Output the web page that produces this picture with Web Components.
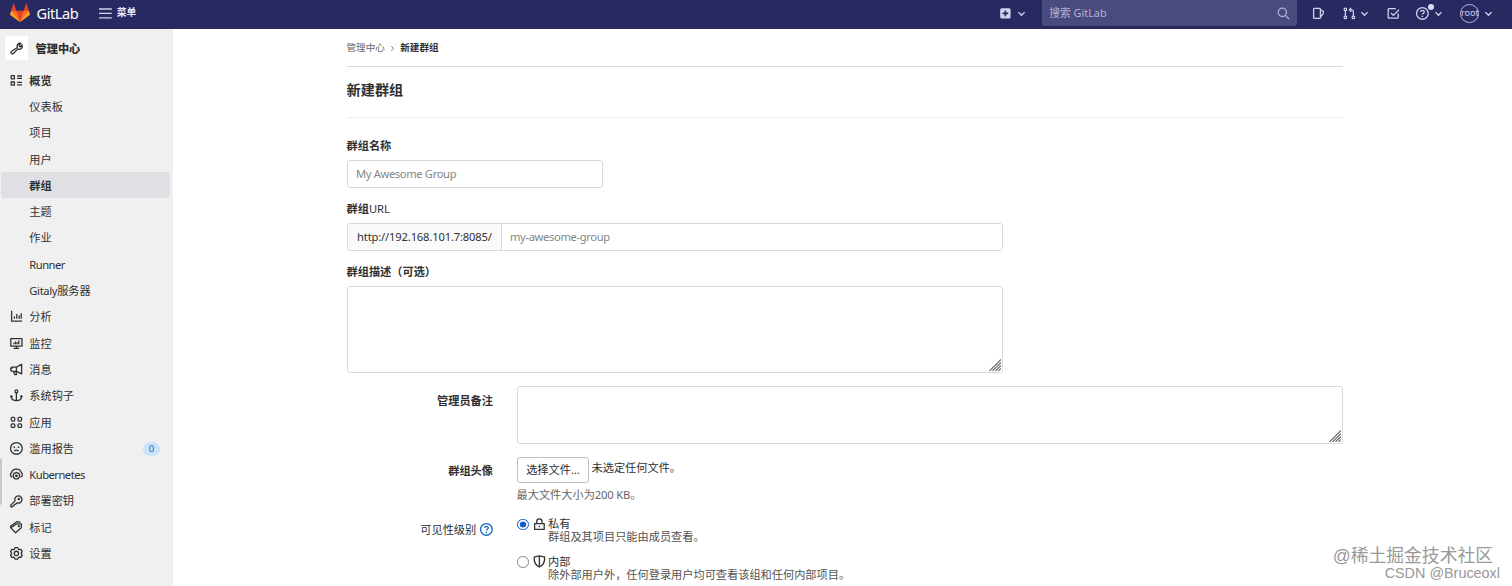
<!DOCTYPE html>
<html lang="zh-CN">
<head>
<meta charset="utf-8">
<title>新建群组 · GitLab</title>
<style>
    body {
        margin: 0;
        height: 586px;
        overflow: hidden;
        background: #fff;
        color: #303030;
        font-family: "Noto Sans", "Noto Sans CJK SC", sans-serif;
        font-size: 11.2px;
        line-height: 16px;
    }
</style>
</head>
<body>
<admin-page></admin-page>

<script>
const icons = {
    admin: '<path d="M9.2 6.8a3.6 3.6 0 0 1 4.400-5L11.200 4.200l.5 1.200 1.400.6 2-2.200a3.700 3.700 0 0 1-5.200 4.800L4.200 14.300a1.700 1.700 0 0 1-2.500-2.500z"/>',
    overview: '<path d="M1.500 2h4v4h-4zM1.500 10h4v4h-4zM9 2.500h6M9 5.500h6M9 10.500h6M9 13.500h6"/>',
    chart: '<path d="M2 1v13h13M5.500 8v3M8.500 5v6M11.500 7v4M14 4v7"/>',
    monitor: '<path d="M1 2h14v9.500H1zM8 11.500V14M4.500 14.300h7M5 7v2M7 5.500V9M9 6.500V9M11 4.500V9"/>',
    messages: '<path d="M14.500 1.500v12L8 10.500H3.500a2.700 2.700 0 0 1 0-5.400H8zM8 5v5.500M4.500 10.500l1.300 4h2.400l-1-4M1 5l2 2"/>',
    hook: '<circle cx="8" cy="3" r="1.800"/><path d="M8 5v9.500M1.500 8.500v1.700C2 13 5 14.500 8 14.500s6-1.500 6.500-4.300V8.500M.5 10l1-1.600L3.200 10M12.800 10l1.700-1.600 1 1.600"/>',
    apps: '<rect x="1.500" y="1.800" width="4.500" height="4.500" rx="1.500"/><rect x="10" y="1.800" width="4.500" height="4.500" rx="1.500"/><rect x="1.500" y="9.800" width="4.500" height="4.500" rx="1.500"/><rect x="10" y="9.800" width="4.500" height="4.500" rx="1.500"/>',
    abuse: '<circle cx="8" cy="8" r="7.300"/><path d="M5.500 11.500c.8-1.700 4.200-1.700 5 0"/><path d="M4.300 6l2 1M11.700 6l-2 1" stroke-width="1.600"/>',
    cloud: '<path d="M2.800 11.500A3.200 3.200 0 0 1 2 5.800C3.200-.2 12.800-.2 14 5.800a3.200 3.200 0 0 1-.8 5.700"/><path d="M8 5.500l3.300 1.600.8 3.400-2.200 3.200H6.100l-2.200-3.200.8-3.400z"/><circle cx="8" cy="9.800" r="1"/>',
    key: '<path d="M6.300 7.300a4.500 4.500 0 1 1 2.500 2.500L7 11.500l-1.500.2-.3 1.500-1.400.3-.6 1.300H1v-2.200z"/><circle cx="11" cy="5" r=".7"/>',
    labels: '<path d="M1 8.500L8.500 3.500l5.800.2-.2 4.800L7 14.800zM1 8.500l-.3-1.800L8.500.9l4.500.6"/><circle cx="11" cy="6.500" r=".6"/>',
    settings: '<path d="M6.300.9h3.400l.7 1.700 1.300.7 2-.3 1.600 2.800-1.100 1.500v1.400l1.100 1.500-1.600 2.800-2-.3-1.300.7-.7 1.700H6.300l-.7-1.700-1.300-.7-2 .3L.7 10.200l1.100-1.500V7.300L.7 5.800 2.300 3l2 .3 1.300-.7z"/><circle cx="8" cy="8" r="2.700"/>',
    menu: '<path d="M0 2.500h16M0 8h16M0 13.500h16"/>',
    plus: '<path d="M3.500 1.500h9a2 2 0 0 1 2 2v9a2 2 0 0 1-2 2h-9a2 2 0 0 1-2-2v-9a2 2 0 0 1 2-2z" fill="currentColor" stroke="none"/><path d="M8 4.500v7M4.500 8h7" stroke="#292961" stroke-width="2"/>',
    chevron: '<path d="M3.500 6L8 10.500 12.500 6" stroke-width="2"/>',
    right: '<path d="M6 4l4 4-4 4"/>',
    search: '<circle cx="6.700" cy="6.700" r="5.200"/><path d="M10.500 10.500L15 15"/>',
    issues: '<path d="M3 1.700h6.500a1 1 0 0 1 1 1v10.600a1 1 0 0 1-1 1H3a1 1 0 0 1-1-1V2.700a1 1 0 0 1 1-1zM10.500 3.500l3.900 2-.6 3-3.300 4"/>',
    merge: '<circle cx="3" cy="3" r="1.600"/><circle cx="3" cy="13" r="1.600"/><circle cx="13" cy="13" r="1.600"/><path d="M3 4.600v6.800M13 11.400V6a2.500 2.500 0 0 0-2.500-2.500H8.300M10.200 1L8 3.500 10.200 6"/>',
    todo: '<path d="M14 8v5a1 1 0 0 1-1 1H2.500a1 1 0 0 1-1-1V3a1 1 0 0 1 1-1H11M5 7.500l3 3L15 3.500"/>',
    help: '<circle cx="8" cy="8" r="7.300"/><path d="M5.800 6.300c.1-3 4.600-2.800 4.500-.1 0 1.500-2.300 1.600-2.300 3.300"/><path d="M8 10.900v1.600" stroke-width="1.800"/>',
    lock: '<path d="M2 7h12v7.300H2zM4.700 7V4.500a3.300 3.300 0 0 1 6.600 0V7M8 9.700v2"/>',
    shield: '<path d="M1.500 2.500C4 2.500 6 1 8 1s4 1.500 6.500 1.500c.5 6-1 10-6.500 12.500C2.500 12.500 1 8.500 1.500 2.500zM8 1v14"/>'
};

class GlIcon extends HTMLElement {
    connectedCallback() {
        this.attachShadow({ mode: 'open' });
        this.shadowRoot.innerHTML = `
            <style>
                :host { display: inline-block; flex: none; width: 12.8px; height: 12.8px; }
                svg { display: block; width: 100%; height: 100%; overflow: visible; }
            </style>
            <svg viewBox="0 0 16 16" fill="none" stroke="currentColor" stroke-width="1.6" stroke-linejoin="round">${icons[this.getAttribute('name')]}</svg>
        `;
    }
}
customElements.define('gl-icon', GlIcon);

class NavBar extends HTMLElement {
    connectedCallback() {
        this.attachShadow({ mode: 'open' });
        this.shadowRoot.innerHTML = `
            <style>
                :host {
                    display: flex;
                    align-items: center;
                    flex: none;
                    box-sizing: border-box;
                    height: 28.5px;
                    padding: 0 17.6px 2.5px 10px;
                    background: #292961;
                    color: #d1d1f0;
                }
                .logo { width: 20px; height: 20px; }
                .brand { margin-left: 6.5px; font-size: 14.6px; letter-spacing: -.45px; color: #fff; width: 62px; }
                .menu { margin-left: 5.5px; font-size: 9.8px; font-weight: 700; color: #e8e8fa; }
                .search {
                    display: flex;
                    align-items: center;
                    justify-content: space-between;
                    box-sizing: border-box;
                    width: 255px;
                    height: 26px;
                    padding: 1px 7px;
                    margin-left: 15px;
                    border-radius: 0 0 3px 3px;
                    background: #4b4a7e;
                    color: #b3b2d6;
                    font-size: 10.8px;
                }
                .chev { width: 11px; height: 11px; }
                .help { position: relative; display: flex; margin-left: 16px; }
                .help i {
                    position: absolute;
                    left: 11.5px;
                    top: -3px;
                    width: 6px;
                    height: 6px;
                    border-radius: 50%;
                    background: #dcdcf7;
                }
                .avatar {
                    display: flex;
                    align-items: center;
                    justify-content: center;
                    box-sizing: border-box;
                    width: 19px;
                    height: 19px;
                    margin-left: 16.5px;
                    border: 1px solid #b5b4dc;
                    border-radius: 50%;
                    font-size: 9px;
                }
            </style>
            <svg class="logo" viewBox="0 0 36 36">
                <path fill="#e24329" d="M2 14l9.380 9v-9l-4-12.280c-.205-.632-1.176-.632-1.380 0zM34 14l-9.380 9v-9l4-12.280c.205-.632 1.176-.632 1.380 0zM18 34.380L3 14h30z"/>
                <path fill="#fc6d26" d="M18 34.380L11.380 14H2l4 11zM18 34.380L24.620 14H34l-4 11z"/>
                <path fill="#fca326" d="M2 14L.1 20.160c-.18.565 0 1.200.5 1.560L18 34.380zM34 14l1.900 6.160c.18.565 0 1.200-.5 1.560L18 34.380z"/>
            </svg>
            <span class="brand">GitLab</span>
            <gl-icon name="menu"></gl-icon>
            <span class="menu">菜单</span>
            <gl-icon name="plus" style="margin-left:auto"></gl-icon>
            <gl-icon class="chev" name="chevron" style="margin-left:4px"></gl-icon>
            <div class="search"><span>搜索 GitLab</span><gl-icon name="search"></gl-icon></div>
            <gl-icon name="issues" style="margin-left:15px"></gl-icon>
            <gl-icon name="merge" style="margin-left:18px"></gl-icon>
            <gl-icon class="chev" name="chevron" style="margin-left:3.5px"></gl-icon>
            <gl-icon name="todo" style="margin-left:17px"></gl-icon>
            <span class="help"><gl-icon name="help"></gl-icon><i></i></span>
            <gl-icon class="chev" name="chevron" style="margin-left:4px"></gl-icon>
            <span class="avatar">root</span>
            <gl-icon class="chev" name="chevron" style="margin-left:4px"></gl-icon>
        `;
    }
}
customElements.define('nav-bar', NavBar);

class SideItem extends HTMLElement {
    connectedCallback() {
        const icon = this.getAttribute('icon');
        const badge = this.getAttribute('badge');
        this.attachShadow({ mode: 'open' });
        this.shadowRoot.innerHTML = `
            <style>
                :host {
                    display: flex;
                    align-items: center;
                    box-sizing: border-box;
                    width: 169.5px;
                    height: 26.3px;
                    padding: 1px 10px 0 9.5px;
                    border-radius: 3px;
                }
                :host([bold]) { font-weight: 700; }
                :host([active]) { background: #dfdfe4; }
                :host([latin]) { letter-spacing: -.5px; }
                .icon { display: flex; width: 19.3px; flex: none; margin-top: -1px; }
                .badge {
                    width: 17px;
                    height: 14px;
                    margin-left: auto;
                    border-radius: 7px;
                    background: #cbe2f9;
                    color: #1068bf;
                    font-size: 9.5px;
                    line-height: 14px;
                    text-align: center;
                }
            </style>
            <span class="icon">${icon ? `<gl-icon name="${icon}"></gl-icon>` : ''}</span>
            <slot></slot>
            ${badge ? `<span class="badge">${badge}</span>` : ''}
        `;
    }
}
customElements.define('side-item', SideItem);

const menuItems = [
    { text: '概览', icon: 'overview', bold: true },
    { text: '仪表板' },
    { text: '项目' },
    { text: '用户' },
    { text: '群组', bold: true, active: true },
    { text: '主题' },
    { text: '作业' },
    { text: 'Runner', latin: true },
    { text: '<span style="letter-spacing:-.35px">Gitaly</span>服务器' },
    { text: '分析', icon: 'chart' },
    { text: '监控', icon: 'monitor' },
    { text: '消息', icon: 'messages' },
    { text: '系统钩子', icon: 'hook' },
    { text: '应用', icon: 'apps' },
    { text: '滥用报告', icon: 'abuse', badge: '0' },
    { text: 'Kubernetes', icon: 'cloud', latin: true },
    { text: '部署密钥', icon: 'key' },
    { text: '标记', icon: 'labels' },
    { text: '设置', icon: 'settings' }
];

class SideBar extends HTMLElement {
    connectedCallback() {
        this.attachShadow({ mode: 'open' });
        this.shadowRoot.innerHTML = `
            <style>
                :host {
                    position: relative;
                    display: block;
                    flex: none;
                    box-sizing: border-box;
                    width: 173px;
                    padding: 7.5px 0 0 .5px;
                    background: #f0f0f0;
                }
                .context { display: flex; align-items: center; padding-left: 4.5px; margin-bottom: 7px; font-weight: 700; }
                .context span {
                    display: flex;
                    align-items: center;
                    justify-content: center;
                    width: 23px;
                    height: 24px;
                    margin-right: 7.5px;
                    background: #fff;
                }
                .context b { padding-top: 1px; }
                /* edge handle next to the window border */
                .handle {
                    position: absolute;
                    left: 0;
                    top: 429px;
                    width: 2px;
                    height: 47px;
                    border-radius: 0 2px 2px 0;
                    background: #c9c9c9;
                }
            </style>
            <div class="context"><span><gl-icon name="admin"></gl-icon></span><b>管理中心</b></div>
            ${menuItems.map(item => `
                <side-item ${item.icon ? `icon="${item.icon}"` : ''} ${item.badge ? `badge="${item.badge}"` : ''}
                    ${item.bold ? 'bold' : ''} ${item.active ? 'active' : ''} ${item.latin ? 'latin' : ''}><span>${item.text}</span></side-item>
            `).join('')}
            <div class="handle"></div>
        `;
    }
}
customElements.define('side-bar', SideBar);

class TextField extends HTMLElement {
    connectedCallback() {
        const prefix = this.getAttribute('prefix');
        this.attachShadow({ mode: 'open' });
        this.shadowRoot.innerHTML = `
            <style>
                :host {
                    display: flex;
                    box-sizing: border-box;
                    height: 27.5px;
                    border: 1px solid #dadada;
                    border-radius: 3px;
                    background: #fff;
                    color: #868686;
                    line-height: 26px;
                    overflow: hidden;
                }
                .prefix {
                    box-sizing: border-box;
                    width: 154px;
                    padding-left: 9px;
                    border-right: 1px solid #dadada;
                    background: #fafafa;
                    color: #303030;
                    letter-spacing: -.16px;
                    white-space: nowrap;
                }
                .value { padding-left: 8px; letter-spacing: -.36px; }
            </style>
            ${prefix ? `<span class="prefix">${prefix}</span>` : ''}
            <span class="value"><slot></slot></span>
        `;
    }
}
customElements.define('text-field', TextField);

class TextBox extends HTMLElement {
    connectedCallback() {
        this.attachShadow({ mode: 'open' });
        this.shadowRoot.innerHTML = `
            <style>
                :host {
                    display: flex;
                    align-items: flex-end;
                    justify-content: flex-end;
                    box-sizing: border-box;
                    border: 1px solid #dadada;
                    border-radius: 3px;
                }
                svg { width: 12px; height: 12px; margin: 0 1px 1px 0; }
            </style>
            <svg viewBox="0 0 12 12" fill="none" stroke="#666" stroke-width="1.1"><path d="M.5 12L12 .5M3.500 12L12 3.500M6.500 12L12 6.500M9.500 12L12 9.500"/></svg>
        `;
    }
}
customElements.define('text-box', TextBox);

class FormRow extends HTMLElement {
    connectedCallback() {
        this.attachShadow({ mode: 'open' });
        this.shadowRoot.innerHTML = `
            <style>
                :host { display: grid; grid-template-columns: 146px 1fr; column-gap: 24px; }
                .label { display: flex; justify-content: flex-end; font-weight: 700; }
                :host([plain]) .label { font-weight: 400; }
            </style>
            <div class="label"><slot name="label"></slot></div>
            <div><slot></slot></div>
        `;
    }
}
customElements.define('form-row', FormRow);

class RadioOption extends HTMLElement {
    connectedCallback() {
        this.attachShadow({ mode: 'open' });
        this.shadowRoot.innerHTML = `
            <style>
                :host { display: grid; grid-template-columns: 16px 15px 1fr; height: 37.5px; line-height: 13px; align-content: start; }
                .dot { box-sizing: border-box; width: 11.5px; height: 11.5px; margin-top: 1.5px; border: 1.2px solid #868686; border-radius: 50%; }
                :host([checked]) .dot { border: 1.5px solid #0b5cd0; background: radial-gradient(#0b5cd0 3px, #fff 3.6px); }
                gl-icon { margin-top: .5px; }
                .desc { grid-column: 3; color: #525252; white-space: nowrap; }
            </style>
            <span class="dot"></span>
            <gl-icon name="${this.getAttribute('icon')}"></gl-icon>
            <span><slot></slot></span>
            <span class="desc"><slot name="desc"></slot></span>
        `;
    }
}
customElements.define('radio-option', RadioOption);

class GroupForm extends HTMLElement {
    connectedCallback() {
        this.attachShadow({ mode: 'open' });
        this.shadowRoot.innerHTML = `
            <style>
                :host { display: block; width: 996px; margin-left: 174px; }
                .crumbs {
                    display: flex;
                    align-items: center;
                    box-sizing: border-box;
                    height: 38px;
                    padding-top: 2px;
                    border-bottom: 1px solid #dbdbdb;
                    font-size: 9.6px;
                    color: #666;
                }
                .crumbs span { margin-left: -.5px; }
                .crumbs gl-icon { width: 9px; height: 9px; margin: 0 3.2px; }
                .crumbs b { color: #303030; }
                h1 {
                    box-sizing: border-box;
                    height: 51.5px;
                    margin: 0 0 20px;
                    padding-top: 13px;
                    border-bottom: 1px solid #eee;
                    font-size: 14.2px;
                    line-height: 20px;
                    text-indent: -.5px;
                }
                label { display: block; height: 22px; font-weight: 700; text-indent: -.5px; }
                label span { font-weight: 400; }
                .name { width: 255.5px; margin-bottom: 13.5px; }
                .path { width: 656px; margin-bottom: 13.5px; }
                .desc { width: 656px; height: 87px; margin-bottom: 13px; }
                .notes { width: 826px; height: 58px; }
                .file { display: flex; height: 26px; }
                .file span {
                    box-sizing: border-box;
                    width: 72px;
                    height: 26px;
                    margin-right: 2.5px;
                    border: 1px solid #bfbfbf;
                    border-radius: 3px;
                    line-height: 24px;
                    text-align: center;
                }
                .file em { font-style: normal; line-height: 22px; }
                .hint { margin: 4px 0 0 -.5px; color: #666; }
                .hint span { letter-spacing: -.15px; }
                .help { display: flex; align-items: center; }
                .help gl-icon { margin-left: 4px; color: #1068bf; }
            </style>
            <div class="crumbs"><span>管理中心</span><gl-icon name="right"></gl-icon><b>新建群组</b></div>
            <h1>新建群组</h1>
            <label>群组名称</label>
            <text-field class="name">My Awesome Group</text-field>
            <label>群组<span>URL</span></label>
            <text-field class="path" prefix="http://192.168.101.7:8085/">my-awesome-group</text-field>
            <label>群组描述（可选）</label>
            <text-box class="desc"></text-box>
            <form-row style="height:71px">
                <span slot="label" style="margin-top:7px">管理员备注</span>
                <text-box class="notes"></text-box>
            </form-row>
            <form-row style="height:60px">
                <span slot="label" style="margin-top:6px">群组头像</span>
                <div class="file"><span>选择文件...</span><em>未选定任何文件。</em></div>
                <div class="hint">最大文件大小为<span>200 KB</span>。</div>
            </form-row>
            <form-row plain>
                <span slot="label" class="help" style="height:25px">可见性级别<gl-icon name="help"></gl-icon></span>
                <radio-option icon="lock" checked>私有<span slot="desc">群组及其项目只能由成员查看。</span></radio-option>
                <radio-option icon="shield">内部<span slot="desc">除外部用户外，任何登录用户均可查看该组和任何内部项目。</span></radio-option>
            </form-row>
        `;
    }
}
customElements.define('group-form', GroupForm);

class WaterMark extends HTMLElement {
    connectedCallback() {
        this.attachShadow({ mode: 'open' });
        this.shadowRoot.innerHTML = `
            <style>
                :host {
                    position: absolute;
                    right: 12px;
                    bottom: 5px;
                    color: #999;
                    text-align: right;
                    white-space: nowrap;
                }
                .top { margin-right: 7px; font: 17.8px/20px "Liberation Sans", "Noto Sans CJK SC", sans-serif; }
                .bottom { font: 14.4px/16px "Liberation Sans", sans-serif; margin-top: -1px; }
            </style>
            <div class="top">@稀土掘金技术社区</div>
            <div class="bottom">CSDN @Bruceoxl</div>
        `;
    }
}
customElements.define('water-mark', WaterMark);

class AdminPage extends HTMLElement {
    connectedCallback() {
        this.attachShadow({ mode: 'open' });
        this.shadowRoot.innerHTML = `
            <style>
                :host { position: relative; display: flex; flex-direction: column; height: 586px; overflow: hidden; }
                .body { display: flex; flex: 1; min-height: 0; }
            </style>
            <nav-bar></nav-bar>
            <div class="body"><side-bar></side-bar><group-form></group-form></div>
            <water-mark></water-mark>
        `;
    }
}
customElements.define('admin-page', AdminPage);
</script>
</body>
</html>
